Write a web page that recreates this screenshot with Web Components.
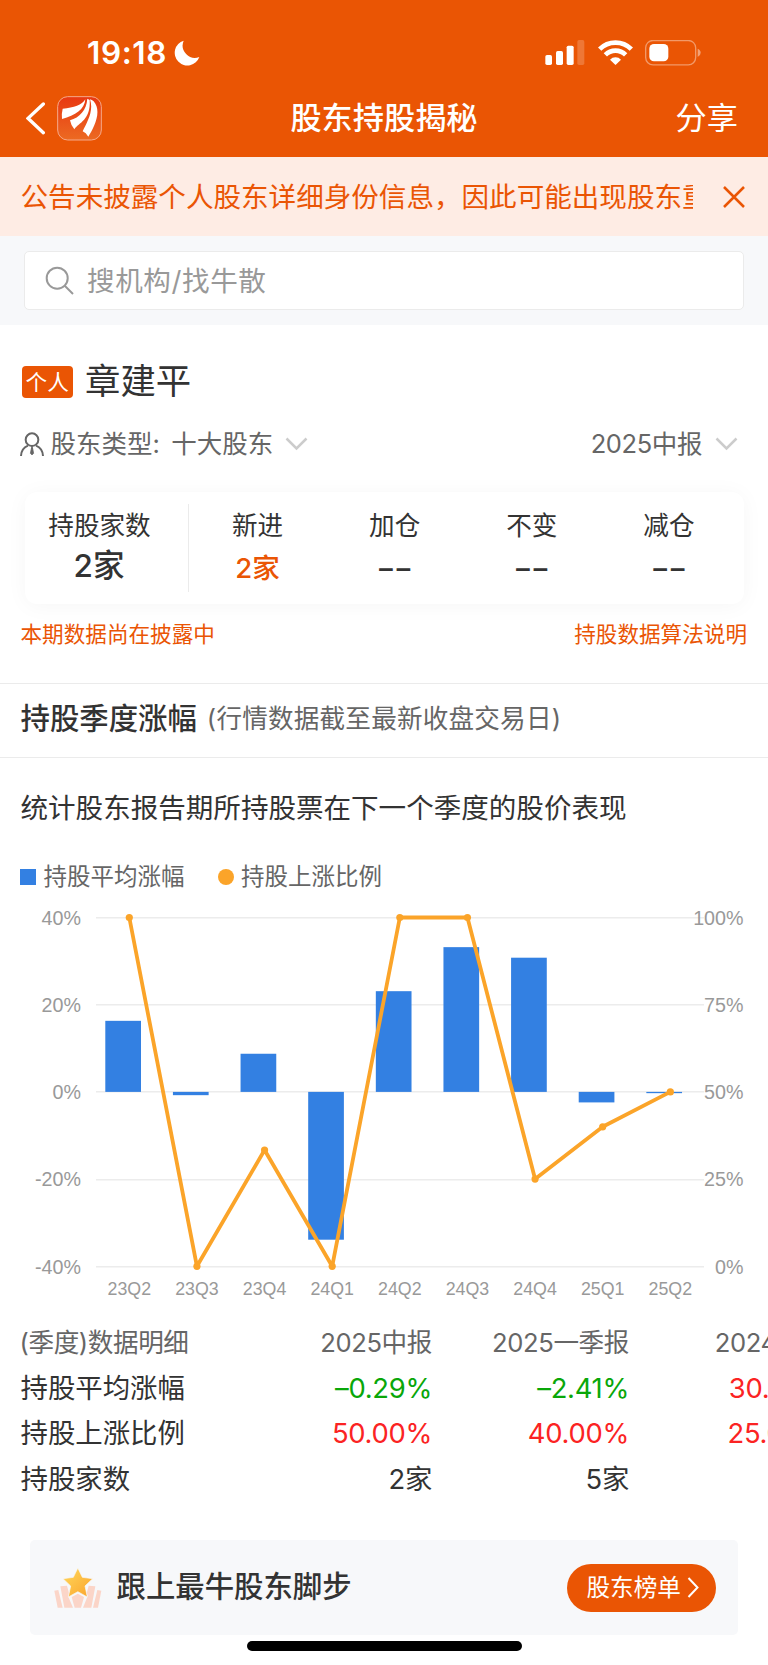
<!DOCTYPE html>
<html lang="zh-CN">
<head>
  <meta charset="UTF-8">
  <meta name="viewport" content="width=device-width, initial-scale=1.0">
  <title>股东持股揭秘</title>
  <style>
    :root {
      --brand: #ea5504;
      --text: #333333;
      --text-soft: #666666;
      --text-muted: #999999;
      --panel: #f7f8fa;
      --line: #ebebeb;
      --up: #fb2323;
      --down: #09a709;
    }

    body {
      margin: 0;
      width: 768px;
      height: 1665px;
      overflow: hidden;
      background: #ffffff;
      color: var(--text);
      font-family: Inter, "Noto Sans CJK SC", sans-serif;
    }
  </style>
</head>
<body>
  <status-bar time="19:18"></status-bar>
  <nav-bar action="分享">股东持股揭秘</nav-bar>
  <notice-bar>公告未披露个人股东详细身份信息，因此可能出现股东重</notice-bar>
  <search-bar>搜机构/找牛散</search-bar>
  <holder-info></holder-info>
  <holding-summary></holding-summary>
  <section-title note="(行情数据截至最新收盘交易日)">持股季度涨幅</section-title>
  <quarter-chart></quarter-chart>
  <quarter-table></quarter-table>
  <promo-bar button="股东榜单">跟上最牛股东脚步</promo-bar>
  <home-indicator></home-indicator>

  <script>
    class StatusBar extends HTMLElement {

      constructor () {
        super()
        this.shadow = this.attachShadow({ mode: 'open' })
      }

      connectedCallback () {
        this.render()
      }

      render () {
        this.shadow.innerHTML =
        /*html*/`
        <style>
          :host {
            align-items: center;
            background: var(--brand);
            box-sizing: border-box;
            color: #ffffff;
            display: flex;
            height: 80px;
            justify-content: space-between;
            padding: 25px 66px 0 87px;
          }

          .time, .icons {
            align-items: center;
            display: flex;
          }

          .time {
            font-size: 31.5px;
            font-weight: 600;
            gap: 7px;
            letter-spacing: 0.6px;
            line-height: 40px;
          }

          svg {
            display: block;
          }

          .icons {
            gap: 12.5px;
          }
        </style>

        <div class="time">
          <span>${this.getAttribute('time')}</span>
          <svg width="26" height="26" viewBox="524 119 78 78">
            <path fill="#fff" d="M553 121A38 38 0 1 0 600 170A37 37 0 0 1 553 121Z"/>
          </svg>
        </div>
        <div class="icons">
          <svg width="40" height="26" viewBox="482 117 120 78" fill="#fff">
            <rect x="483" y="162" width="20" height="30" rx="5"/>
            <rect x="515" y="150" width="21" height="42" rx="5"/>
            <rect x="547" y="134" width="21" height="58" rx="5"/>
            <rect x="579" y="117" width="21" height="75" rx="5" opacity=".2"/>
          </svg>
          <svg width="35" height="26" viewBox="639 117 105 78" fill="none" stroke="#fff" stroke-width="14">
            <path d="M644 144.500A67 67 0 0 1 739 144.500M661 161.500A43 43 0 0 1 722 161.500"/>
            <path fill="#fff" stroke="none" d="M691.500 192L675 176A23 23 0 0 1 708 176Z"/>
          </svg>
          <svg width="57" height="26" viewBox="783 117 171 78">
            <rect x="785" y="118.500" width="150" height="73" rx="22" fill="none" stroke="#fff" stroke-opacity=".4" stroke-width="4"/>
            <rect x="796" y="129" width="57" height="52" rx="14" fill="#fff"/>
            <path fill="#fff" fill-opacity=".45" d="M941 143Q950 147 950 155.500Q950 164 941 168Z"/>
          </svg>
        </div>
        `
      }
    }

    customElements.define('status-bar', StatusBar);

    class NavBar extends HTMLElement {

      constructor () {
        super()
        this.shadow = this.attachShadow({ mode: 'open' })
      }

      connectedCallback () {
        this.render()
      }

      render () {
        this.shadow.innerHTML =
        /*html*/`
        <style>
          :host {
            align-items: center;
            background: var(--brand);
            box-sizing: border-box;
            color: #ffffff;
            display: grid;
            font-size: 31.2px;
            grid-template-columns: 1fr auto 1fr;
            height: 77px;
            line-height: 40px;
            padding: 0 30px 0 26px;
          }

          .left {
            align-items: center;
            display: flex;
            gap: 12px;
          }

          .title {
            font-weight: 500;
            padding-left: 4px;
          }

          .title, .action {
            position: relative;
            top: -0.5px;
          }

          .action {
            text-align: right;
          }
        </style>

        <div class="left">
          <svg width="19" height="33" viewBox="78 306 57 99">
            <path d="M130 312L84 355L130 398" fill="none" stroke="#fff" stroke-width="10" stroke-linecap="round" stroke-linejoin="miter"/>
          </svg>
          <svg width="45" height="45" viewBox="171 288 135 135">
            <defs>
              <linearGradient id="logo" x1="0" y1="0" x2="0" y2="1">
                <stop offset="0" stop-color="#e83812"/>
                <stop offset="1" stop-color="#ec6a22"/>
              </linearGradient>
            </defs>
            <rect x="173" y="290" width="131" height="130" rx="30" fill="url(#logo)" stroke="#f6a98a" stroke-width="3"/>
            <g fill="#fff">
              <path d="M256 298C246 315 222 323 188 326Q184 342 186 357C226 347 254 328 256 298Z"/>
              <path d="M262 296C259 331 239 352 210 361Q213 377 223 388C236 368 273 360 269 300Z"/>
              <path d="M270 298C282 333 261 367 248 394Q258 398 265 410C280 386 308 335 281 304Q276 299 270 298Z"/>
            </g>
          </svg>
        </div>
        <div class="title"><slot></slot></div>
        <div class="action">${this.getAttribute('action')}</div>
        `
      }
    }

    customElements.define('nav-bar', NavBar);

    class NoticeBar extends HTMLElement {

      constructor () {
        super()
        this.shadow = this.attachShadow({ mode: 'open' })
      }

      connectedCallback () {
        this.render()
      }

      render () {
        this.shadow.innerHTML =
        /*html*/`
        <style>
          :host {
            align-items: center;
            background: #feece4;
            box-sizing: border-box;
            color: var(--brand);
            display: flex;
            height: 79px;
            justify-content: space-between;
            padding: 1px 22px 0 20.5px;
          }

          .text {
            font-size: 27.57px;
            line-height: 40px;
            overflow: hidden;
            white-space: nowrap;
            width: 672.500px;
          }
        </style>

        <div class="text"><slot></slot></div>
        <svg width="24" height="24" viewBox="0 0 24 24">
          <path d="M2 2L22 22M22 2L2 22" stroke="#ea5504" stroke-width="2.500"/>
        </svg>
        `
      }
    }

    customElements.define('notice-bar', NoticeBar);

    class SearchBar extends HTMLElement {

      constructor () {
        super()
        this.shadow = this.attachShadow({ mode: 'open' })
      }

      connectedCallback () {
        this.render()
      }

      render () {
        this.shadow.innerHTML =
        /*html*/`
        <style>
          :host {
            background: var(--panel);
            box-sizing: border-box;
            display: block;
            height: 89px;
            padding: 15px 24px;
          }

          .box {
            align-items: center;
            background: #ffffff;
            border: 1px solid var(--line);
            border-radius: 5px;
            box-sizing: border-box;
            color: var(--text-muted);
            display: flex;
            font-size: 27.57px;
            gap: 13px;
            height: 59px;
            letter-spacing: 0.6px;
            line-height: 40px;
            padding-left: 20px;
          }
        </style>

        <div class="box">
          <svg width="29" height="29" viewBox="0 0 29 29" fill="none" stroke="#999" stroke-width="2">
            <circle cx="12.200" cy="12.200" r="10.500"/>
            <path d="M19.500 19.500L28 28"/>
          </svg>
          <slot></slot>
        </div>
        `
      }
    }

    customElements.define('search-bar', SearchBar);

    class HolderInfo extends HTMLElement {

      constructor () {
        super()
        this.shadow = this.attachShadow({ mode: 'open' })
      }

      connectedCallback () {
        this.render()
      }

      render () {
        const arrow =
        /*html*/`
        <svg class="arrow" width="23" height="14" viewBox="0 0 23 14">
          <path d="M1.500 1.500L11.500 11.500L21.500 1.500" fill="none" stroke="#ccc" stroke-width="2.500"/>
        </svg>
        `

        this.shadow.innerHTML =
        /*html*/`
        <style>
          :host {
            box-sizing: border-box;
            display: block;
            height: 167px;
            padding: 33px 30px 0 20px;
          }

          .name, .filters, .filter {
            align-items: center;
            display: flex;
          }

          .name {
            gap: 12px;
            font-size: 35.4px;
            height: 48px;
            line-height: 48px;
            padding-left: 1.5px;
          }

          .badge {
            background: var(--brand);
            border-radius: 4px;
            color: #ffffff;
            font-size: 21.66px;
            height: 32px;
            line-height: 32px;
            text-align: center;
            width: 51.500px;
          }

          .filters {
            color: var(--text-soft);
            font-size: 25.5px;
            height: 40px;
            justify-content: space-between;
            line-height: 40px;
            margin-top: 18px;
          }

          .type {
            margin: 0 11.5px 0 6.5px;
          }

          .arrow {
            margin-left: 11.5px;
          }

          .period {
            letter-spacing: -0.4px;
          }

          .period + .arrow {
            margin-left: 13px;
          }
        </style>

        <div class="name"><span class="badge">个人</span><span>章建平</span></div>
        <div class="filters">
          <div class="filter">
            <svg width="24" height="24" viewBox="60 604 72 72" fill="none" stroke="#666" stroke-width="6">
              <circle cx="96" cy="627" r="19"/>
              <path d="M63 676Q64 653 84 645M129 676Q128 653 108 645"/>
              <path d="M96 647V655" stroke-width="5"/>
              <path d="M94 653H98L101 668L96 673L91 668Z" fill="#666" stroke-width="2"/>
            </svg>
            <span class="type">股东类型:</span>
            <span>十大股东</span>
            ${arrow}
          </div>
          <div class="filter">
            <span class="period">2025中报</span>
            ${arrow}
          </div>
        </div>
        `
      }
    }

    customElements.define('holder-info', HolderInfo);

    class HoldingSummary extends HTMLElement {

      constructor () {
        super()
        this.shadow = this.attachShadow({ mode: 'open' })

        this.data = []
      }

      connectedCallback () {
        this.loadData()
        this.render()
      }

      loadData () {
        this.data = [
          { label: '新进', value: '2家', highlight: true },
          { label: '加仓', value: '––' },
          { label: '不变', value: '––' },
          { label: '减仓', value: '––' }
        ]
      }

      render () {
        this.shadow.innerHTML =
        /*html*/`
        <style>
          :host {
            box-sizing: border-box;
            display: block;
            height: 191px;
            padding: 0 21px 0 20.5px;
          }

          .card {
            align-items: center;
            background: #ffffff;
            border-radius: 12px;
            box-shadow: 0 2px 22px rgba(0, 0, 0, 0.04);
            box-sizing: border-box;
            display: flex;
            height: 112px;
            margin: 0 3.5px 0 4.5px;
            padding-right: 6px;
          }

          .total, .item {
            box-sizing: border-box;
            font-size: 25.6px;
            line-height: 40px;
            padding-top: 1.5px;
            text-align: center;
          }

          .total {
            border-right: 1.5px solid var(--line);
            height: 88px;
            padding-right: 14px;
            width: 164px;
          }

          .items {
            display: grid;
            flex: 1;
            grid-template-columns: repeat(4, 1fr);
            height: 88px;
          }

          .value {
            font-size: 27.57px;
            font-weight: 500;
            line-height: 44px;
          }

          .total .value {
            font-size: 31.5px;
            line-height: 40px;
            padding-right: 1px;
          }

          .highlight {
            color: var(--brand);
          }

          .empty {
            font-family: "Liberation Sans", sans-serif;
            font-weight: 700;
            letter-spacing: 2.2px;
            padding-left: 2px;
          }

          .notes {
            color: var(--brand);
            display: flex;
            font-size: 21.6px;
            justify-content: space-between;
            line-height: 32px;
            margin-top: 14px;
          }
        </style>

        <div class="card">
          <div class="total">
            <div>持股家数</div>
            <div class="value">2家</div>
          </div>
          <div class="items"></div>
        </div>
        <div class="notes">
          <span>本期数据尚在披露中</span>
          <span>持股数据算法说明</span>
        </div>
        `

        const items = this.shadow.querySelector('.items')

        this.data.forEach(({ label, value, highlight }) => {
          const item = document.createElement('div')
          item.classList.add('item')

          const title = document.createElement('div')
          title.textContent = label
          item.appendChild(title)

          const number = document.createElement('div')
          number.classList.add('value', highlight ? 'highlight' : 'empty')
          number.textContent = value
          item.appendChild(number)

          items.appendChild(item)
        })
      }
    }

    customElements.define('holding-summary', HoldingSummary);

    class SectionTitle extends HTMLElement {

      constructor () {
        super()
        this.shadow = this.attachShadow({ mode: 'open' })
      }

      connectedCallback () {
        this.render()
      }

      render () {
        this.shadow.innerHTML =
        /*html*/`
        <style>
          :host {
            align-items: center;
            border-bottom: 1px solid var(--line);
            border-top: 1px solid var(--line);
            box-sizing: border-box;
            display: flex;
            gap: 10px;
            height: 75px;
            padding: 0 20.5px 3.5px;
          }

          h2 {
            font-size: 29.4px;
            font-weight: 500;
            line-height: 40px;
            margin: 0;
          }

          span {
            color: var(--text-soft);
            font-size: 25.6px;
            letter-spacing: 0.2px;
            line-height: 40px;
          }
        </style>

        <h2><slot></slot></h2>
        <span>${this.getAttribute('note')}</span>
        `
      }
    }

    customElements.define('section-title', SectionTitle);

    class QuarterChart extends HTMLElement {

      constructor () {
        super()
        this.shadow = this.attachShadow({ mode: 'open' })

        this.data = []
      }

      connectedCallback () {
        this.loadData()
        this.render()
      }

      loadData () {
        this.data = [
          { quarter: '23Q2', change: 16.3, ratio: 100 },
          { quarter: '23Q3', change: -0.75, ratio: 0 },
          { quarter: '23Q4', change: 8.75, ratio: 33.33 },
          { quarter: '24Q1', change: -33.9, ratio: 0 },
          { quarter: '24Q2', change: 23.1, ratio: 100 },
          { quarter: '24Q3', change: 33.2, ratio: 100 },
          { quarter: '24Q4', change: 30.78, ratio: 25 },
          { quarter: '25Q1', change: -2.41, ratio: 40 },
          { quarter: '25Q2', change: -0.29, ratio: 50 }
        ]
      }

      // El svg empieza en y = 900 de la página
      drawChart () {
        const top = 17.5
        const step = 87.2
        const zero = top + step * 2
        const first = 129.3
        const pitch = 67.63

        const grid = [0, 1, 2, 3, 4].map(i => {
          const y = top + step * i
          return `
            <rect x="96" y="${Math.round(y - 0.5)}" width="608" height="1.5" fill="#ececec"/>
            <text x="81" y="${y + 7.2}" text-anchor="end">${40 - i * 20}%</text>
            <text x="743.500" y="${y + 7.2}" text-anchor="end">${100 - i * 25}%</text>
          `
        }).join('')

        const bars = this.data.map(({ change }, i) => {
          const height = Math.abs(change) * step / 20
          const y = change > 0 ? zero - height : zero
          return `<rect x="${first + pitch * i - 24}" y="${y}" width="35.700" height="${height}" fill="#3380e2"/>`
        }).join('')

        const points = this.data.map(({ ratio }, i) => [first + pitch * i, top + (100 - ratio) * step / 25])
        const dots = points.map(([x, y]) => `<circle cx="${x}" cy="${y}" r="3.600"/>`).join('')

        const quarters = this.data.map(({ quarter }, i) =>
          `<text class="quarter" x="${first + pitch * i}" y="395" text-anchor="middle">${quarter}</text>`
        ).join('')

        return `
          ${grid}
          ${bars}
          <polyline points="${points.join(' ')}" fill="none" stroke="#fba429" stroke-width="3.800" stroke-linejoin="round"/>
          <g fill="#fba429">${dots}</g>
          ${quarters}
        `
      }

      render () {
        this.shadow.innerHTML =
        /*html*/`
        <style>
          :host {
            box-sizing: border-box;
            display: block;
            height: 562px;
            padding-top: 30px;
          }

          p {
            font-size: 27.55px;
            line-height: 40px;
            margin: 0;
            padding-left: 20.5px;
          }

          .legend {
            align-items: center;
            color: var(--text-soft);
            display: flex;
            font-size: 23.5px;
            gap: 33px;
            line-height: 34px;
            margin-top: 32px;
            padding-left: 20px;
          }

          .legend span {
            align-items: center;
            display: flex;
            gap: 7.500px;
          }

          .legend span::before {
            background: #3380e2;
            content: '';
            height: 16px;
            width: 16px;
          }

          .legend .line::before {
            background: #fba429;
            border-radius: 50%;
          }

          svg {
            display: block;
            margin-top: 6px;
          }

          text {
            fill: #999999;
            font-family: "Liberation Sans", sans-serif;
            font-size: 19.7px;
          }

          .quarter {
            font-size: 17.8px;
          }
        </style>

        <p>统计股东报告期所持股票在下一个季度的股价表现</p>
        <div class="legend">
          <span>持股平均涨幅</span>
          <span class="line">持股上涨比例</span>
        </div>
        <svg width="768" height="410" viewBox="0 0 768 410">${this.drawChart()}</svg>
        `
      }
    }

    customElements.define('quarter-chart', QuarterChart);

    class QuarterTable extends HTMLElement {

      constructor () {
        super()
        this.shadow = this.attachShadow({ mode: 'open' })

        this.data = []
      }

      connectedCallback () {
        this.loadData()
        this.render()
      }

      loadData () {
        this.data = [
          { label: '(季度)数据明细', values: ['2025中报', '2025一季报', '2024年报'], head: true },
          { label: '持股平均涨幅', values: ['–0.29%', '–2.41%', '30.78%'] },
          { label: '持股上涨比例', values: ['50.00%', '40.00%', '25.00%'] },
          { label: '持股家数', values: ['2家', '5家', '4家'] }
        ]
      }

      getColor (value) {
        if (!value.includes('%')) return 'plain'
        return value.startsWith('–') ? 'down' : 'up'
      }

      render () {
        this.shadow.innerHTML =
        /*html*/`
        <style>
          :host {
            display: block;
            height: 220px;
            overflow: hidden;
            white-space: nowrap;
          }

          .row {
            display: grid;
            font-size: 27.4px;
            grid-template-columns: 235px 197px 197px 198px;
            line-height: 45.7px;
          }

          .row > :first-child {
            padding-left: 20.5px;
          }

          .value {
            letter-spacing: -0.3px;
            text-align: right;
          }

          .head {
            color: var(--text-soft);
            font-size: 25.6px;
          }

          .head > :first-child {
            letter-spacing: -0.4px;
            padding-left: 19.5px;
          }

          .head .value {
            letter-spacing: -0.4px;
          }

          .up {
            color: var(--up);
          }

          .down {
            color: var(--down);
          }
        </style>
        `

        this.data.forEach(({ label, values, head }) => {
          const row = document.createElement('div')
          row.classList.add('row')
          if (head) row.classList.add('head')

          const title = document.createElement('span')
          title.textContent = label
          row.appendChild(title)

          values.forEach(value => {
            const cell = document.createElement('span')
            cell.classList.add('value', this.getColor(value))
            cell.textContent = value
            row.appendChild(cell)
          })

          this.shadow.appendChild(row)
        })
      }
    }

    customElements.define('quarter-table', QuarterTable);

    class PromoBar extends HTMLElement {

      constructor () {
        super()
        this.shadow = this.attachShadow({ mode: 'open' })
      }

      connectedCallback () {
        this.render()
      }

      render () {
        this.shadow.innerHTML =
        /*html*/`
        <style>
          :host {
            align-items: center;
            background: var(--panel);
            border-radius: 5px;
            box-sizing: border-box;
            display: flex;
            height: 95px;
            margin: 0 30px;
            padding: 0 22px 0 24px;
          }

          .title {
            flex: 1;
            font-size: 29.4px;
            font-weight: 500;
            line-height: 40px;
            margin: 0 0 2px 14.5px;
          }

          .button {
            align-items: center;
            background: var(--brand);
            border-radius: 24px;
            box-sizing: border-box;
            color: #ffffff;
            display: flex;
            font-size: 23.63px;
            gap: 6px;
            height: 48px;
            line-height: 48px;
            padding-left: 19.5px;
            width: 149px;
          }
        </style>

        <svg width="48" height="40" viewBox="161 594 144 120">
          <defs>
            <linearGradient id="star" x1="0" y1="0" x2="1" y2="1">
              <stop offset="0" stop-color="#ffd95c"/>
              <stop offset="1" stop-color="#fba32c"/>
            </linearGradient>
          </defs>
          <g fill="#fbd5c8">
            <path d="M162 662L174 660L187 713H172Z"/>
            <path d="M180 649L200 647L206 670L203 678L218 713H192Z"/>
            <path d="M303 662L291 660L278 713H293Z"/>
            <path d="M285 649L265 647L259 670L262 678L248 713H273Z"/>
            <path d="M214 681L232.500 671L251 681L242 713H223Z"/>
          </g>
          <path fill="url(#star)" stroke="#f7f8fa" stroke-width="2" d="M232.500 594L246 622L277 626L254 648L261 681L232.500 665L204 681L211 648L188 626L219 622Z"/>
        </svg>
        <div class="title"><slot></slot></div>
        <div class="button">
          <span>${this.getAttribute('button')}</span>
          <svg width="12" height="21" viewBox="0 0 12 21">
            <path d="M1.500 1L10.500 10.500L1.500 20" fill="none" stroke="#fff" stroke-width="2"/>
          </svg>
        </div>
        `
      }
    }

    customElements.define('promo-bar', PromoBar);

    class HomeIndicator extends HTMLElement {

      constructor () {
        super()
        this.shadow = this.attachShadow({ mode: 'open' })
      }

      connectedCallback () {
        this.render()
      }

      render () {
        this.shadow.innerHTML =
        /*html*/`
        <style>
          :host {
            background: #000000;
            border-radius: 5px;
            display: block;
            height: 9.5px;
            margin: 6px auto 0;
            width: 275px;
          }
        </style>
        `
      }
    }

    customElements.define('home-indicator', HomeIndicator);
  </script>
</body>
</html>
